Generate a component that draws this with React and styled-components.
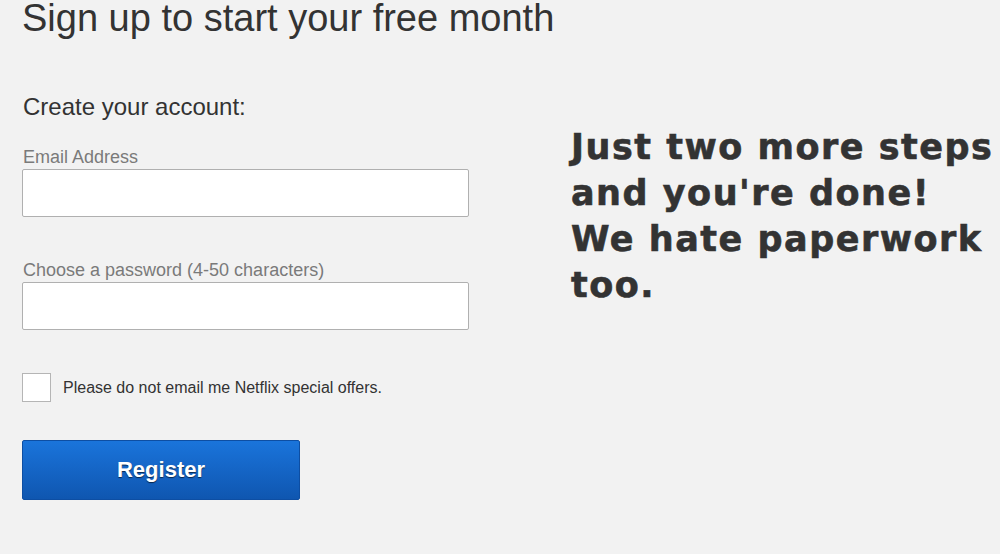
import React from "react";
import styled, { createGlobalStyle } from "styled-components";

const Global = createGlobalStyle`
  html, body { margin: 0; padding: 0; background: #f2f2f2; }
  body { font-family: Arial, "Liberation Sans", sans-serif; color: #333; }
  * { box-sizing: border-box; }
`;

const Page = styled.div`
  width: 1000px;
  height: 554px;
  overflow: hidden;
  display: flex;
  padding-left: 22px;
`;

const FormCol = styled.div`
  width: 447px;
  display: flex;
  flex-direction: column;
`;

const Title = styled.h1`
  margin: 0;
  font-weight: normal;
  font-size: 38px;
  line-height: 36px;
  white-space: nowrap;
  color: #333;
`;

const SubTitle = styled.h2`
  margin: 57px 0 0 1px;
  font-weight: normal;
  font-size: 24px;
  line-height: 28px;
  color: #333;
`;

const Field = styled.div`
  display: flex;
  flex-direction: column;
  margin-top: ${(p) => p.$top}px;
`;

const Label = styled.label`
  font-size: 18px;
  line-height: 20px;
  color: #7a7a7a;
  margin-left: 1px;
  margin-bottom: 2px;
`;

const Input = styled.input`
  width: 447px;
  height: 48px;
  background: #fff;
  border: 1px solid #b0b0b0;
  border-radius: 2px;
  outline: none;
`;

const CheckRow = styled.label`
  display: flex;
  align-items: center;
  gap: 12px;
  margin-top: 43px;
  font-size: 16px;
  line-height: 20px;
  color: #333;
`;

const Box = styled.span`
  width: 29px;
  height: 29px;
  background: #fff;
  border: 1px solid #b5b5b5;
`;

const Button = styled.button`
  margin-top: 38px;
  width: 278px;
  height: 60px;
  border: 1px solid #0d4ea3;
  border-radius: 2px;
  background: linear-gradient(#1a74db, #0f56b0);
  color: #fff;
  font-family: Arial, "Liberation Sans", sans-serif;
  font-weight: bold;
  font-size: 22px;
  text-shadow: 0 1px 1px rgba(0, 0, 0, 0.6);
  cursor: pointer;
`;

const Aside = styled.div`
  margin-left: 102px;
  padding-top: 124px;
  font-family: "DejaVu Sans", sans-serif;
  font-weight: bold;
  font-size: 35px;
  line-height: 46px;
  color: #333;
  letter-spacing: 1.5px;
  -webkit-text-stroke: 0.6px #333;
  white-space: nowrap;
`;

export default function App() {
  return (
    <>
      <Global />
      <Page>
        <FormCol>
          <Title>Sign up to start your free month</Title>
          <SubTitle>Create your account:</SubTitle>
          <Field $top={26}>
            <Label>Email Address</Label>
            <Input type="email" />
          </Field>
          <Field $top={43}>
            <Label>Choose a password (4-50 characters)</Label>
            <Input type="password" />
          </Field>
          <CheckRow>
            <Box />
            Please do not email me Netflix special offers.
          </CheckRow>
          <Button>Register</Button>
        </FormCol>
        <Aside>
          Just two more steps
          <br />
          and you're done!
          <br />
          We hate paperwork
          <br />
          too.
        </Aside>
      </Page>
    </>
  );
}
